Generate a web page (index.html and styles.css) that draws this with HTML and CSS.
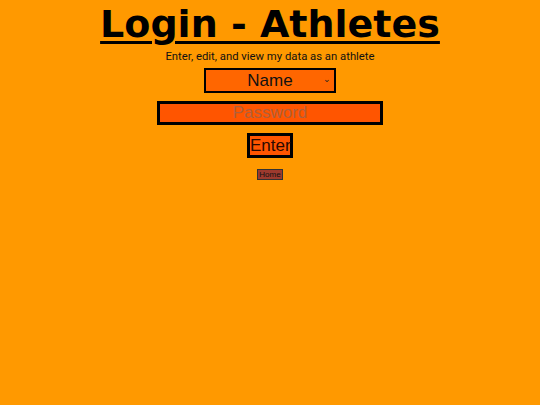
FILE: index.html
```html
<!DOCTYPE html>
<html lang="en">
  <head>
    <meta charset="UTF-8" />
    <meta name="viewport" content="width=device-width, initial-scale=1.0" />
    <title>Login - Athletes</title>
    <link rel="stylesheet" href="styles.css">
  </head>
  <body>
    <h1 class="judul">Login - Athletes</h1>
    <p class="sub">Enter, edit, and view my data as an athlete</p>

    <form class="login">
      <div class="pilih">
        <select class="nama">
          <option>Name</option>
        </select>
        <span class="panah">&#8964;</span>
      </div>
      <input class="pass" type="password" placeholder="Password" />
      <button class="enter" type="button">Enter</button>
    </form>

    <div class="home-wrap">
      <button class="home" type="button">Home</button>
    </div>
  </body>
</html>
```

FILE: styles.css
```css
body {
  background-color: #ff9900;
  margin: 0;
  font-family: Roboto, "Liberation Sans", sans-serif;
  text-align: center;
  color: #000;
}
.judul {
  font-family: "DejaVu Sans", sans-serif;
  font-size: 38px;
  margin: 0;
  line-height: 48px;
  text-decoration: underline;
  text-decoration-thickness: 3px;
  text-underline-offset: 4px;
}
.sub {
  font-size: 11.3px;
  line-height: 14px;
  margin: 2px 0 4px;
  color: #111;
}
.login {
  display: flex;
  flex-direction: column;
  align-items: center;
  gap: 8px;
}
.pilih {
  position: relative;
  width: 132px;
  height: 25px;
}
.nama {
  appearance: none;
  -webkit-appearance: none;
  width: 132px;
  height: 25px;
  box-sizing: border-box;
  border: 2px solid black;
  border-radius: 0;
  background-color: #ff6600;
  color: #111;
  font-size: 17px;
  text-align: center;
  text-align-last: center;
  font-family: "Liberation Sans", sans-serif;
  padding: 0;
}
.panah {
  position: absolute;
  right: 5px;
  top: 7px;
  font-size: 9px;
  line-height: 9px;
  color: #222;
  pointer-events: none;
}
.pass {
  width: 226px;
  height: 24px;
  box-sizing: border-box;
  border: 3px solid black;
  border-radius: 0;
  background-color: #ff5500;
  font-size: 17px;
  text-align: center;
  font-family: "Liberation Sans", sans-serif;
  padding: 0;
}
.pass::placeholder {
  color: #b0603a;
}
.enter {
  width: 46px;
  height: 25px;
  box-sizing: border-box;
  border: 3px solid black;
  border-radius: 0;
  background-color: #ff5500;
  color: #2a0a00;
  font-size: 17px;
  padding: 0;
  font-family: "Liberation Sans", sans-serif;
}
.home-wrap {
  display: flex;
  justify-content: center;
  margin-top: 11px;
}
.home {
  height: 11px;
  box-sizing: border-box;
  font-size: 8px;
  line-height: 8px;
  padding: 0 1px;
  border: 1px solid #333;
  border-radius: 0;
  background-color: #9c3a2e;
  color: #111;
}
```
